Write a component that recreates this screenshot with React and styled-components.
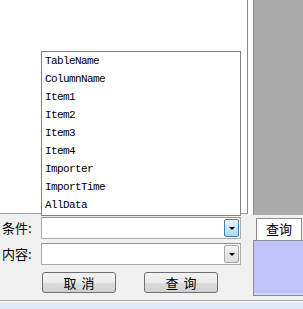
import React from 'react'
import styled, { createGlobalStyle, css } from 'styled-components'

const GlobalStyle = createGlobalStyle`
  html, body {
    margin: 0;
    padding: 0;
    background: #f0f0f0;
  }
  body {
    width: 303px;
    height: 309px;
    overflow: hidden;
    font-family: "Noto Sans CJK SC", "DejaVu Sans", sans-serif;
  }
`

const Window = styled.div`
  position: relative;
  width: 303px;
  height: 309px;
  display: flex;
  flex-direction: column;
  background: #f0f0f0;
  overflow: hidden;
`

const TopRow = styled.div`
  display: flex;
  height: 215px;
`

const WhitePanel = styled.div`
  width: 247px;
  height: 213px;
  background: #ffffff;
  border-right: 1px solid #8a8a8a;
  border-bottom: 1px solid #a0a0a0;
`

const Gutter = styled.div`
  width: 5px;
  background: #fbfbfb;
`

const GrayPanel = styled.div`
  flex: 1;
  background: #ababab;
  border-left: 1px solid #8e8e8e;
`

const DropList = styled.ul`
  position: absolute;
  left: 41px;
  top: 51px;
  width: 198px;
  height: 163px;
  margin: 0;
  padding: 0;
  list-style: none;
  background: #ffffff;
  border: 1px solid #828282;
`

const DropItem = styled.li`
  height: 18px;
  line-height: 18px;
  padding-left: 3px;
  font-family: "Liberation Mono", monospace;
  font-size: 11px;
  letter-spacing: -0.6px;
  color: #000;
`

const BottomArea = styled.div`
  display: flex;
  height: 84px;
`

const Form = styled.div`
  width: 253px;
  display: flex;
  flex-direction: column;
  padding-top: 2px;
`

const FieldRow = styled.div`
  display: flex;
  align-items: center;
  height: 22px;
  margin-bottom: 4px;
`

const Label = styled.span`
  width: 38px;
  padding-left: 2px;
  font-size: 13px;
  color: #000;
  line-height: 22px;
`

const Combo = styled.div`
  width: 197px;
  height: 20px;
  margin-left: 1px;
  display: flex;
  justify-content: flex-end;
  align-items: center;
  background: #fff;
  border: 1px solid #abadb3;
  border-top-color: #8f9297;
  padding-right: 1px;
`

const ComboButton = styled.div`
  width: 15px;
  height: 18px;
  box-sizing: border-box;
  display: flex;
  align-items: center;
  justify-content: center;
  border: 1px solid #a8a8a8;
  border-radius: 2px;
  background: linear-gradient(#f4f4f4, #dcdcdc);

  ${(p) =>
    p.active &&
    css`
      border-color: #3c7fb1;
      background: linear-gradient(#eaf6fd, #a7d9f5);
    `}
`

const Arrow = styled.span`
  width: 0;
  height: 0;
  border-left: 3px solid transparent;
  border-right: 3px solid transparent;
  border-top: 3px solid #000;
`

const ButtonRow = styled.div`
  display: flex;
  gap: 28px;
  padding-left: 42px;
  margin-top: 3px;
`

const PushButton = styled.button`
  width: 74px;
  height: 21px;
  padding: 0;
  box-sizing: border-box;
  border: 1px solid #707070;
  border-radius: 3px;
  background: linear-gradient(#f2f2f2 0%, #ebebeb 50%, #dddddd 51%, #cfcfcf 100%);
  font-family: "Noto Sans CJK SC", sans-serif;
  font-size: 13px;
  line-height: 18px;
  color: #000;
  word-spacing: 2px;
`

const TabArea = styled.div`
  flex: 1;
  display: flex;
  flex-direction: column;
  padding-top: 3px;
`

const TabHeader = styled.div`
  margin-left: 3px;
  width: 46px;
  height: 22px;
  box-sizing: border-box;
  background: #ffffff;
  border: 1px solid #8c8e94;
  border-bottom: none;
  text-align: center;
  font-size: 13px;
  line-height: 20px;
  color: #000;
`

const TabPage = styled.div`
  height: 54px;
  background: #c2c2fb;
  border: 1px solid #8c8e94;
  border-right: none;
  box-shadow: inset 0 -2px 0 #d4d4fb;
`

const BottomLine = styled.div`
  height: 1px;
  margin-top: 1px;
  background: #a0a0a0;
`

const StatusStrip = styled.div`
  flex: 1;
  border-top: 1px solid #ffffff;
  background: linear-gradient(#e3ebf6, #dbe5f2);
`

const items = [
  'TableName',
  'ColumnName',
  'Item1',
  'Item2',
  'Item3',
  'Item4',
  'Importer',
  'ImportTime',
  'AllData',
]

const App = () => {
  return (
    <Window>
      <GlobalStyle />
      <TopRow>
        <WhitePanel />
        <Gutter />
        <GrayPanel />
      </TopRow>
      <BottomArea>
        <Form>
          <FieldRow>
            <Label>条件:</Label>
            <Combo>
              <ComboButton active>
                <Arrow />
              </ComboButton>
            </Combo>
          </FieldRow>
          <FieldRow>
            <Label>内容:</Label>
            <Combo>
              <ComboButton>
                <Arrow />
              </ComboButton>
            </Combo>
          </FieldRow>
          <ButtonRow>
            <PushButton>取 消</PushButton>
            <PushButton>查 询</PushButton>
          </ButtonRow>
        </Form>
        <TabArea>
          <TabHeader>查询</TabHeader>
          <TabPage />
        </TabArea>
      </BottomArea>
      <BottomLine />
      <StatusStrip />
      <DropList>
        {items.map((it) => (
          <DropItem key={it}>{it}</DropItem>
        ))}
      </DropList>
    </Window>
  )
}

export default App
